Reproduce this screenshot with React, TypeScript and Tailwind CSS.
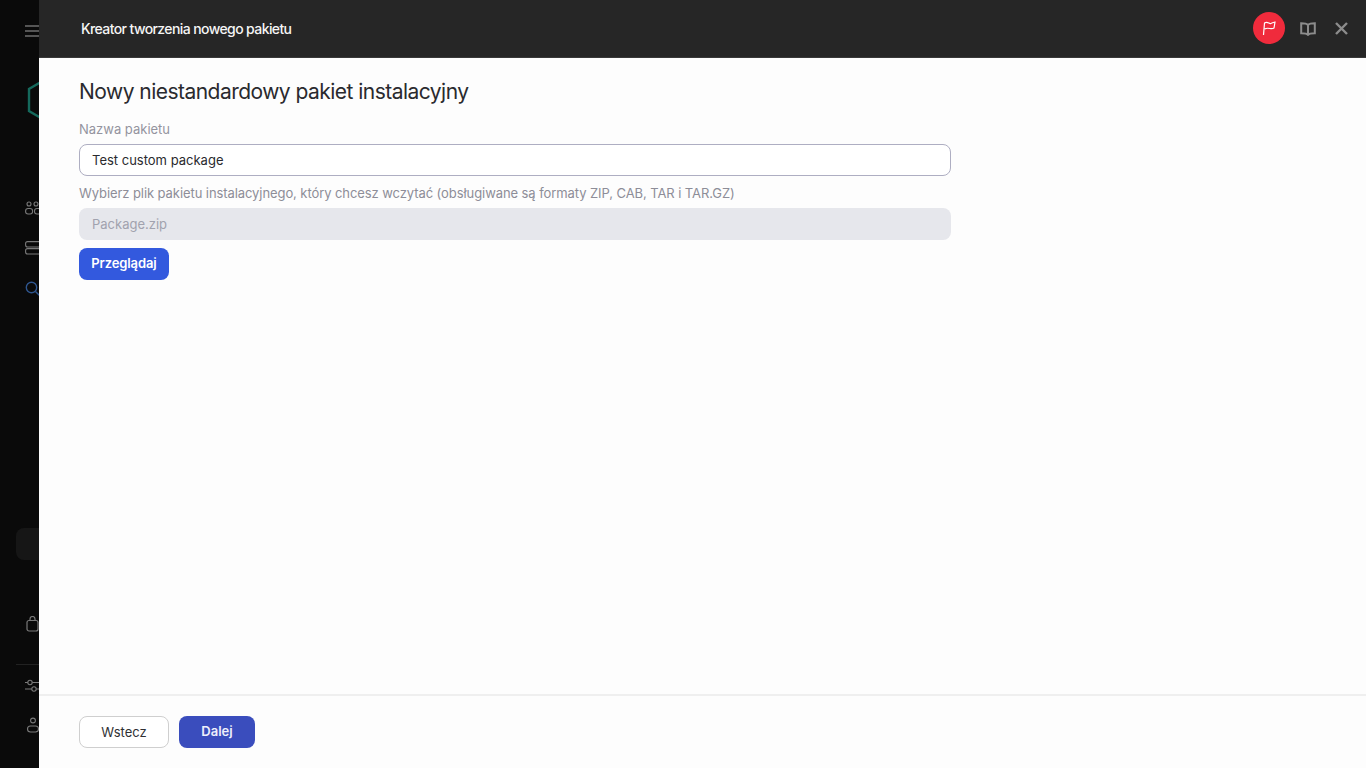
function Sidebar() {
  return (
    <aside className="w-[39px] h-full shrink-0 bg-[#0a0a0a] overflow-hidden flex flex-col">
      <div className="w-[80px] pl-[16px] flex flex-col items-start">
        {/* menu */}
        <svg className="ml-[8px] mt-[25px]" width="16" height="12" viewBox="0 0 16 12" fill="none" stroke="#6f6f6f" strokeWidth="1.4">
          <path d="M1 1h14M1 6h14M1 11h14" />
        </svg>
        {/* logo */}
        <svg className="ml-[11px] mt-[40px]" width="40" height="46" viewBox="0 0 40 46" fill="none" stroke="#15695c" strokeWidth="2.4">
          <path d="M20 1.5 38 12v22L20 44.5 2 34V12z" />
        </svg>
        {/* users */}
        <svg className="ml-[9px] mt-[78px]" width="16" height="14" viewBox="0 0 16 14" fill="none" stroke="#7a7a7a" strokeWidth="1.1">
          <circle cx="4" cy="3" r="2" />
          <circle cx="11" cy="3" r="2" />
          <rect x="0.6" y="7.500" width="7" height="5.500" rx="2.500" />
          <rect x="9.500" y="7.500" width="7" height="5.500" rx="2.500" />
        </svg>
        {/* servers */}
        <svg className="ml-[9px] mt-[26px]" width="16" height="14" viewBox="0 0 16 14" fill="none" stroke="#7a7a7a" strokeWidth="1.1">
          <rect x="0.6" y="0.6" width="15" height="5.400" rx="2" />
          <rect x="0.6" y="7.600" width="15" height="5.400" rx="2" />
        </svg>
        {/* search */}
        <svg className="ml-[9px] mt-[26px]" width="16" height="16" viewBox="0 0 16 16" fill="none" stroke="#2f568f" strokeWidth="1.4">
          <circle cx="6.500" cy="6.500" r="5.200" />
          <path d="m10.500 10.500 5 5" />
        </svg>
        <div className="mt-[231px] w-[60px] h-[32px] rounded-lg bg-[#161616]" />
        {/* bag */}
        <svg className="ml-[10px] mt-[56px]" width="14" height="16" viewBox="0 0 14 16" fill="none" stroke="#7a7a7a" strokeWidth="1.2">
          <rect x="1" y="4.500" width="11" height="10.500" rx="2" />
          <path d="M4 4.500V3a2.500 2.500 0 0 1 5 0v1.500" />
        </svg>
        <div className="mt-[32px] w-[60px] h-px bg-[#222222]" />
        {/* sliders */}
        <svg className="ml-[9px] mt-[14px]" width="16" height="14" viewBox="0 0 16 14" fill="none" stroke="#7a7a7a" strokeWidth="1.1">
          <circle cx="5" cy="3.500" r="2.200" />
          <circle cx="9" cy="10" r="2.200" />
          <path d="M0 3.500h2.800M7.200 3.500H16M0 10h6.800M11.200 10H16" />
        </svg>
        {/* user */}
        <svg className="ml-[10px] mt-[24px]" width="14" height="16" viewBox="0 0 14 16" fill="none" stroke="#7a7a7a" strokeWidth="1.1">
          <circle cx="7" cy="3.500" r="2.400" />
          <rect x="1.500" y="9" width="11" height="6" rx="3" />
        </svg>
      </div>
    </aside>
  );
}

export default function App() {
  return (
    <div className="flex w-full h-screen overflow-hidden bg-[#fdfdfd] font-['Inter','Liberation_Sans',sans-serif]">
      <Sidebar />
      <main className="flex-1 min-w-0 flex flex-col">
        <header className="h-[58px] shrink-0 bg-[#262626] flex items-center pl-[42px] pr-[18px] border-b border-[#e6e6e6]/10">
          <h2 className="text-[14px] font-medium tracking-[-0.6px] text-[#f5f5f5]">
            Kreator tworzenia nowego pakietu
          </h2>
          <div className="ml-auto flex items-center">
            <div className="w-[32px] h-[32px] mb-[2px] rounded-full bg-[#f02b3c] flex items-center justify-center">
              <svg width="14" height="16" viewBox="0 0 14 16" fill="none" stroke="#ffffff" strokeWidth="1.2">
                <path d="M1.500 15 2.500 3c3-2 4.500 1 6 .6S12 2 13 2l-1 6c-1 .6-2.500.8-4 .5-2-.4-3.500-.6-5.300.4" />
              </svg>
            </div>
            <svg className="ml-[15px]" width="16" height="14" viewBox="0 0 16 14" fill="none" stroke="#8c8c8c" strokeWidth="2">
              <path d="M8 3c-1-1.200-2.500-1.800-6.800-1.800v10C5.500 11.200 7 11.500 8 12.800c1-1.300 2.500-1.600 6.800-1.600v-10C10.500 1.200 9 1.800 8 3zM8 3v9.800" />
            </svg>
            <svg className="ml-[19px]" width="13" height="13" viewBox="0 0 13 13" fill="none" stroke="#8c8c8c" strokeWidth="2.400">
              <path d="m1 1 11 11M12 1 1 12" />
            </svg>
          </div>
        </header>

        <div className="flex-1 min-h-0 pl-[40px] pt-[20px]">
          <h1 className="text-[21px] leading-[28px] tracking-[-0.53px] text-[#2a2a2e]">
            Nowy niestandardowy pakiet instalacyjny
          </h1>
          <div className="w-[872px] mt-[11px] flex flex-col items-start">
            <label className="text-[13px] leading-[24px] text-[#94949f]">Nazwa pakietu</label>
            <div className="w-full h-[32px] mt-[3px] pt-[1px] rounded-lg border border-[#aeaec2] bg-white flex items-center px-[12px] text-[13px] text-[#2a2a2e]">
              Test custom package
            </div>
            <label className="text-[13px] leading-[24px] mt-[5px] tracking-[-0.08px] text-[#8d8d98]">
              Wybierz plik pakietu instalacyjnego, który chcesz wczytać (obsługiwane są formaty ZIP, CAB, TAR i TAR.GZ)
            </label>
            <div className="w-full h-[32px] mt-[3px] pt-[2px] rounded-lg bg-[#e6e7ec] flex items-center px-[13px] text-[13px] text-[#a1a2ae]">
              Package.zip
            </div>
            <button className="mt-[8px] w-[90px] h-[32px] rounded-lg bg-[#3359de] text-white text-[13px] font-semibold tracking-[-0.1px]">
              Przeglądaj
            </button>
          </div>
        </div>

        <footer className="h-[74px] shrink-0 border-t-2 border-[#efefef] pl-[40px] pt-[20px] flex items-start gap-[10px]">
          <button className="w-[90px] h-[32px] pt-[1px] rounded-lg border border-[#cfcfcf] bg-white text-[13px] text-[#2f2f33]">
            Wstecz
          </button>
          <button className="w-[76px] h-[32px] rounded-lg bg-[#3a4dbd] text-[#eef0fb] text-[13px] font-semibold">
            Dalej
          </button>
        </footer>
      </main>
    </div>
  );
}
